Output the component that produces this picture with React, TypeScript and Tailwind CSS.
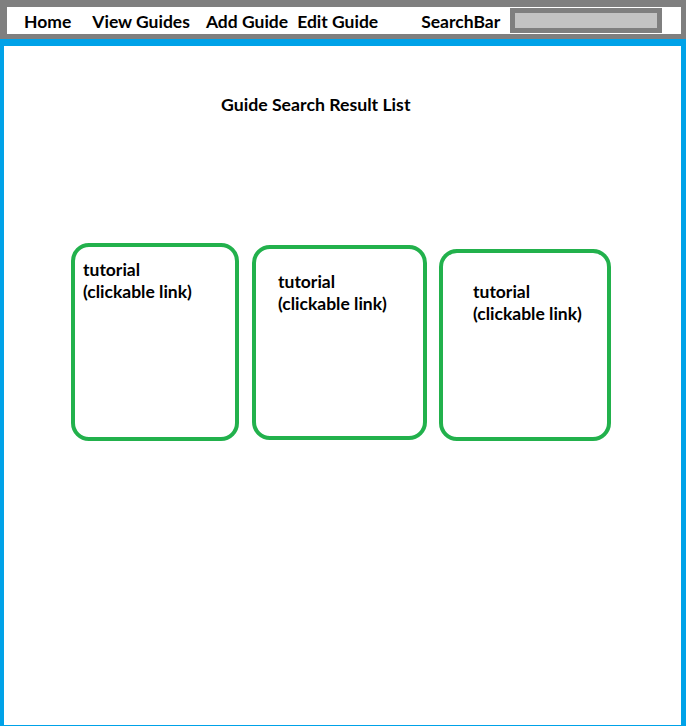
import React from 'react';

const navLinks = [
  { label: 'Home', className: 'ml-[17px]' },
  { label: 'View Guides', className: 'ml-[21px]' },
  { label: 'Add Guide', className: 'ml-4' },
  { label: 'Edit Guide', className: 'ml-[9px]' },
];

interface CardProps {
  className: string;
}

const TutorialCard: React.FC<CardProps> = ({ className }) => (
  <a
    href="#"
    className={`block border-4 border-[#22b14c] rounded-[18px] text-black no-underline ${className}`}
  >
    tutorial
    <br />
    (clickable link)
  </a>
);

export default function App() {
  return (
    <div
      className="w-[686px] h-[726px] flex flex-col bg-white text-black font-bold text-[17.5px] leading-[22px]"
      style={{ fontFamily: 'Lato, "Open Sans", sans-serif' }}
    >
      {/* Top navigation */}
      <div className="bg-[#7f7f7f] pt-[7px] pb-[5px] pl-[7px] pr-[5px]">
        <div className="h-[27px] bg-white flex items-center">
          {navLinks.map((l) => (
            <span key={l.label} className={`${l.className} whitespace-nowrap pt-[2px]`}>
              {l.label}
            </span>
          ))}
          <span className="ml-[43px] whitespace-nowrap pt-[2px]">SearchBar</span>
          <div className="ml-[10px] w-[152px] h-[25px] border-[5px] border-[#7f7f7f] bg-[#c3c3c3]" />
        </div>
      </div>

      {/* Main content */}
      <div className="flex-1 border-[#00a2e8] border-t-[7px] border-l-4 border-r-[5px] border-b bg-white">
        <h1 className="pt-[48px] pl-[217px] text-[17.7px] font-bold">Guide Search Result List</h1>

        <div className="flex items-start pl-[67px] mt-[127px]">
          <TutorialCard className="w-[168px] h-[198px] pt-[12px] pl-[8px]" />
          <TutorialCard className="ml-[13px] mt-[2px] w-[175px] h-[195px] pt-[22px] pl-[22px]" />
          <TutorialCard className="ml-[12px] mt-[6px] w-[172px] h-[192px] pt-[28px] pl-[30px]" />
        </div>
      </div>
    </div>
  );
}
